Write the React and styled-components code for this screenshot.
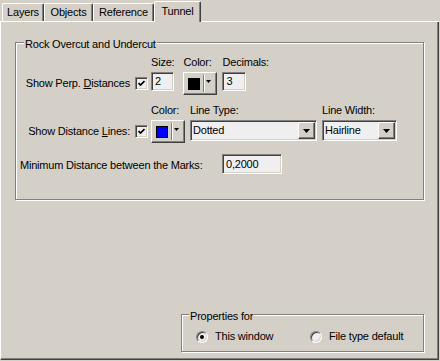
import styled, { createGlobalStyle, css } from "styled-components";

const face = "#d4d0c8";
const light = "#ffffff";
const shadow = "#808080";
const dark = "#404040";
const field = "#efefef";

const GlobalStyle = createGlobalStyle`
  html, body { margin: 0; padding: 0; background: ${face}; }
  * { box-sizing: border-box; }
`;

const sunken = css`
  border-top: 1px solid ${shadow};
  border-left: 1px solid ${shadow};
  border-bottom: 1px solid ${light};
  border-right: 1px solid ${light};
  box-shadow: inset 1px 1px 0 ${dark}, inset -1px -1px 0 ${face};
  background: ${field};
`;

const raised = css`
  background: ${face};
  border-top: 1px solid ${light};
  border-left: 1px solid ${light};
  border-right: 1px solid ${dark};
  border-bottom: 1px solid ${dark};
  box-shadow: inset -1px -1px 0 ${shadow};
`;

const Window = styled.div`
  width: 440px;
  height: 361px;
  background: ${face};
  display: flex;
  flex-direction: column;
  font-family: "Liberation Sans", Arial, sans-serif;
  font-size: 11px;
  line-height: 13px;
  letter-spacing: -0.2px;
  color: #000;
`;

const TabStrip = styled.div`
  width: 439px;
  height: 22px;
  display: flex;
  align-items: flex-end;
  padding-left: 2px;
  border-bottom: 1px solid ${light};
`;

const Tab = styled.div`
  position: relative;
  width: ${(p) => p.$w}px;
  height: ${(p) => (p.$active ? 21 : 18)}px;
  margin-bottom: ${(p) => (p.$active ? -1 : 0)}px;
  padding-bottom: ${(p) => (p.$active ? 2 : 0)}px;
  background: ${face};
  border-top: 1px solid ${light};
  border-left: 1px solid ${light};
  border-right: 1px solid ${dark};
  border-radius: 2px 2px 0 0;
  box-shadow: inset -1px 0 0 ${shadow};
  display: flex;
  align-items: center;
  justify-content: center;
`;

const Panel = styled.div`
  width: 439px;
  height: 338px;
  border-left: 1px solid ${light};
  border-right: 1px solid ${dark};
  border-bottom: 1px solid ${dark};
  box-shadow: inset -1px -1px 0 ${shadow};
  display: flex;
  flex-direction: column;
  padding: 20px 14px 7px 14px;
`;

const GroupBox = styled.div`
  position: relative;
  border: 1px solid ${shadow};
  box-shadow: inset 1px 1px 0 ${light}, 1px 1px 0 ${light};
  width: ${(p) => (p.$w ? `${p.$w}px` : "auto")};
  padding: ${(p) => p.$pad};
  ${(p) =>
    p.$bottom &&
    css`
      margin-top: auto;
      align-self: flex-end;
    `}
`;

const Legend = styled.span`
  position: absolute;
  top: -5px;
  left: ${(p) => p.$left}px;
  padding: 0 1px;
  background: ${face};
  white-space: nowrap;
`;

const Row = styled.div`
  display: flex;
  align-items: flex-start;
  margin-top: ${(p) => p.$mt || 0}px;
`;

const Lead = styled.div`
  width: 128px;
  height: 23px;
  margin-top: 16px;
  display: flex;
  align-items: center;
  justify-content: flex-end;
  gap: 5px;
  white-space: nowrap;
`;

const Field = styled.div`
  display: flex;
  flex-direction: column;
  gap: 3px;
  margin-left: ${(p) => p.$ml}px;
`;

const Caption = styled.div`
  height: 13px;
  white-space: nowrap;
`;

const TextBox = styled.div`
  ${sunken};
  width: ${(p) => p.$w}px;
  height: ${(p) => p.$h || 19}px;
  padding-left: 3px;
  display: flex;
  align-items: center;
`;

const CheckBox = styled.div`
  ${sunken};
  width: 13px;
  height: 13px;
  flex: none;
  display: flex;
  align-items: center;
  justify-content: center;
`;

const ColorButton = styled.div`
  ${raised};
  width: ${(p) => p.$w}px;
  height: 23px;
  display: flex;
  align-items: center;
  padding-left: 4px;
`;

const Swatch = styled.div`
  width: 12px;
  height: 12px;
  background: ${(p) => p.$color};
  border: 1px solid #000;
`;

const Divider = styled.div`
  width: 2px;
  height: 17px;
  margin-left: 3px;
  border-left: 1px solid ${shadow};
  border-right: 1px solid ${light};
`;

const ArrowSmall = styled.svg`
  margin-left: 1px;
  margin-bottom: 5px;
`;

const Select = styled.div`
  ${sunken};
  width: ${(p) => p.$w}px;
  height: 21px;
  display: flex;
  align-items: center;
  padding: 1px 1px 1px 2px;
`;

const SelectText = styled.div`
  flex: 1;
`;

const DropButton = styled.div`
  ${raised};
  width: 17px;
  height: 17px;
  display: flex;
  align-items: center;
  justify-content: center;
`;

const MinRow = styled.div`
  display: flex;
  align-items: center;
  margin-top: 11px;
`;

const MinLabel = styled.div`
  width: 202px;
  padding-top: 2px;
  white-space: nowrap;
`;

const RadioRow = styled.div`
  display: grid;
  grid-template-columns: 114px auto;
  align-items: center;
  height: 13px;
`;

const RadioItem = styled.div`
  display: flex;
  align-items: center;
  gap: 7px;
  white-space: nowrap;
`;

const Radio = styled.div`
  position: relative;
  width: 12px;
  height: 12px;
  border-radius: 50%;
  border: 1px solid;
  border-color: ${shadow} ${light} ${light} ${shadow};
  box-shadow: inset 1px 1px 0 ${dark}, inset -1px -1px 0 ${face};
  background: ${field};
  ${(p) =>
    p.$on &&
    css`
      &::after {
        content: "";
        position: absolute;
        left: 3px;
        top: 3px;
        width: 4px;
        height: 4px;
        border-radius: 50%;
        background: #000;
      }
    `}
`;

const Check = () => (
  <svg width="7" height="7" viewBox="0 0 7 7">
    <path d="M0.5 3 L2.5 5 L6.5 1" stroke="#000" strokeWidth="1.7" fill="none" />
  </svg>
);

const DownArrow = ({ small }) =>
  small ? (
    <ArrowSmall width="5" height="3" viewBox="0 0 5 3">
      <path d="M0 0 H5 L2.5 3 Z" fill="#000" />
    </ArrowSmall>
  ) : (
    <svg width="7" height="4" viewBox="0 0 7 4">
      <path d="M0 0 H7 L3.5 4 Z" fill="#000" />
    </svg>
  );

const ColorPicker = ({ color, w = 34 }) => (
  <ColorButton $w={w}>
    <Swatch $color={color} />
    <Divider />
    <DownArrow small />
  </ColorButton>
);

const Combo = ({ value, w }) => (
  <Select $w={w}>
    <SelectText>{value}</SelectText>
    <DropButton>
      <DownArrow />
    </DropButton>
  </Select>
);

export default function App() {
  return (
    <>
      <GlobalStyle />
      <Window>
        <TabStrip>
          <Tab $w={42}>Layers</Tab>
          <Tab $w={49}>Objects</Tab>
          <Tab $w={61}>Reference</Tab>
          <Tab $w={47} $active>
            Tunnel
          </Tab>
        </TabStrip>
        <Panel>
          <GroupBox $pad="13px 0 25px 4px">
            <Legend $left={8}>Rock Overcut and Undercut</Legend>
            <Row>
              <Lead>
                <span>
                  Show Perp. <u>D</u>istances
                </span>
                <CheckBox>
                  <Check />
                </CheckBox>
              </Lead>
              <Field $ml={3}>
                <Caption>Size:</Caption>
                <TextBox $w={23}>2</TextBox>
              </Field>
              <Field $ml={9}>
                <Caption>Color:</Caption>
                <ColorPicker color="#000000" />
              </Field>
              <Field $ml={5}>
                <Caption>Decimals:</Caption>
                <TextBox $w={24}>3</TextBox>
              </Field>
            </Row>
            <Row $mt={9}>
              <Lead>
                <span>
                  Show Distance <u>L</u>ines:
                </span>
                <CheckBox>
                  <Check />
                </CheckBox>
              </Lead>
              <Field $ml={3}>
                <Caption>Color:</Caption>
                <ColorPicker color="#0000ff" />
              </Field>
              <Field $ml={5}>
                <Caption>Line Type:</Caption>
                <Combo value="Dotted" w={127} />
              </Field>
              <Field $ml={5}>
                <Caption>Line Width:</Caption>
                <Combo value="Hairline" w={75} />
              </Field>
            </Row>
            <MinRow>
              <MinLabel>Minimum Distance between the Marks:</MinLabel>
              <TextBox $w={60} $h={20}>
                0,2000
              </TextBox>
            </MinRow>
          </GroupBox>

          <GroupBox $w={243} $pad="15px 0 8px 14px" $bottom>
            <Legend $left={7}>Properties for</Legend>
            <RadioRow>
              <RadioItem>
                <Radio $on />
                This window
              </RadioItem>
              <RadioItem>
                <Radio />
                File type default
              </RadioItem>
            </RadioRow>
          </GroupBox>
        </Panel>
      </Window>
    </>
  );
}
